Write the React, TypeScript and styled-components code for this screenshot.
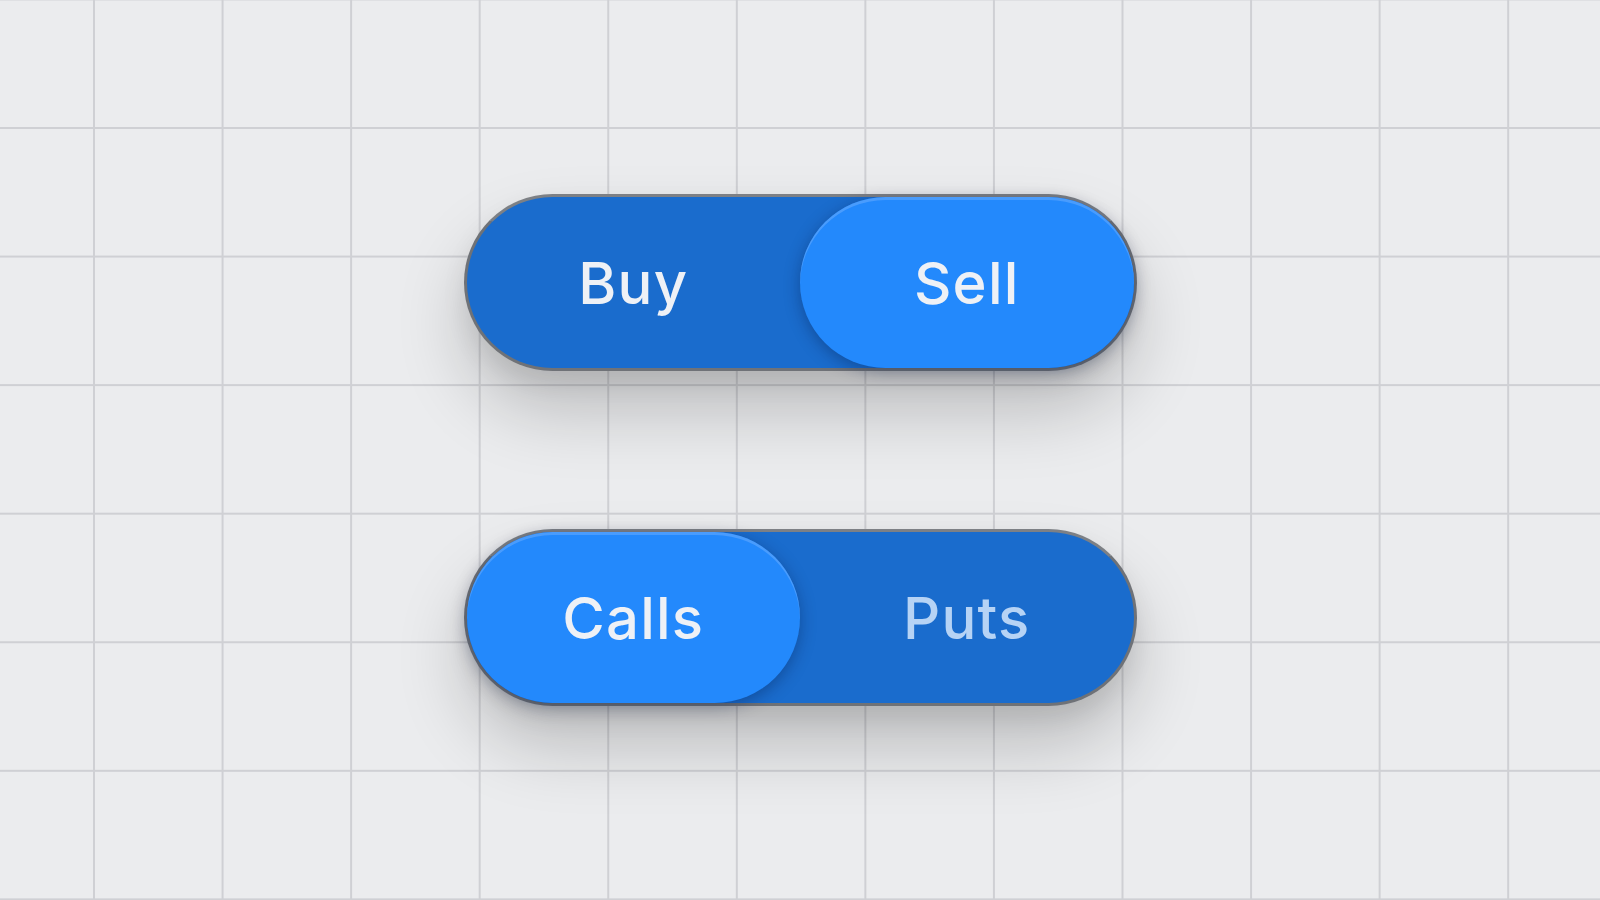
import React, { useState } from "react";
import styled, { createGlobalStyle } from "styled-components";

const GlobalStyle = createGlobalStyle`
  html, body {
    margin: 0;
    padding: 0;
    width: 100%;
    height: 100%;
  }
  body {
    font-family: Inter, "Noto Sans", "Liberation Sans", sans-serif;
    background: #ebecee;
  }
  * { box-sizing: border-box; }
`;

const Page = styled.main`
  width: 1600px;
  height: 900px;
  display: flex;
  align-items: center;
  justify-content: center;
  background-color: #ebecee;
  background-image:
    linear-gradient(to right, #cfd0d4 0, #cfd0d4 2px, transparent 2px),
    linear-gradient(to bottom, #cfd0d4 0, #cfd0d4 2px, transparent 2px);
  background-size: 128.57px 128.57px;
  background-position: 93px 127px;
  overflow: hidden;
`;

const Stack = styled.div`
  display: flex;
  flex-direction: column;
  gap: 158px;
`;

const Track = styled.div`
  position: relative;
  width: 673px;
  height: 177px;
  border: 3px solid #6f7277;
  border-top-color: #7d8085;
  border-radius: 999px;
  background: #1a6ccd;
  display: grid;
  grid-template-columns: 1fr 1fr;
  box-shadow: 0 40px 70px rgba(0, 0, 0, 0.2), 0 12px 24px rgba(0, 0, 0, 0.08);
`;

const Thumb = styled.div<{ $side: "left" | "right" }>`
  position: absolute;
  top: 0;
  bottom: 0;
  width: 50%;
  left: ${(p) => (p.$side === "left" ? "0" : "50%")};
  border-radius: 999px;
  background: #2389fc;
  box-shadow:
    inset 0 3px 0 rgba(120, 180, 255, 0.45),
    0 4px 16px rgba(0, 20, 60, 0.35);
`;

const Option = styled.button<{ $active: boolean }>`
  position: relative;
  z-index: 1;
  appearance: none;
  border: 0;
  background: transparent;
  padding: 0;
  margin: 0;
  display: flex;
  align-items: center;
  justify-content: center;
  font-family: Inter, "Noto Sans", "Liberation Sans", sans-serif;
  font-size: 58px;
  font-weight: 500;
  letter-spacing: 1.2px;
  color: ${(p) => (p.$active ? "#eef1f6" : "#b6d3f5")};
  cursor: pointer;
`;

type ToggleProps = {
  options: [string, string];
  initial: 0 | 1;
  inactiveBright?: boolean;
};

function SegmentedToggle({ options, initial, inactiveBright }: ToggleProps) {
  const [value, setValue] = useState<0 | 1>(initial);
  return (
    <Track>
      <Thumb $side={value === 0 ? "left" : "right"} />
      {options.map((label, i) => (
        <Option
          key={label}
          $active={i === value || !!inactiveBright}
          onClick={() => setValue(i as 0 | 1)}
        >
          {label}
        </Option>
      ))}
    </Track>
  );
}

export default function App() {
  return (
    <>
      <GlobalStyle />
      <Page>
        <Stack>
          <SegmentedToggle options={["Buy", "Sell"]} initial={1} inactiveBright />
          <SegmentedToggle options={["Calls", "Puts"]} initial={0} />
        </Stack>
      </Page>
    </>
  );
}
